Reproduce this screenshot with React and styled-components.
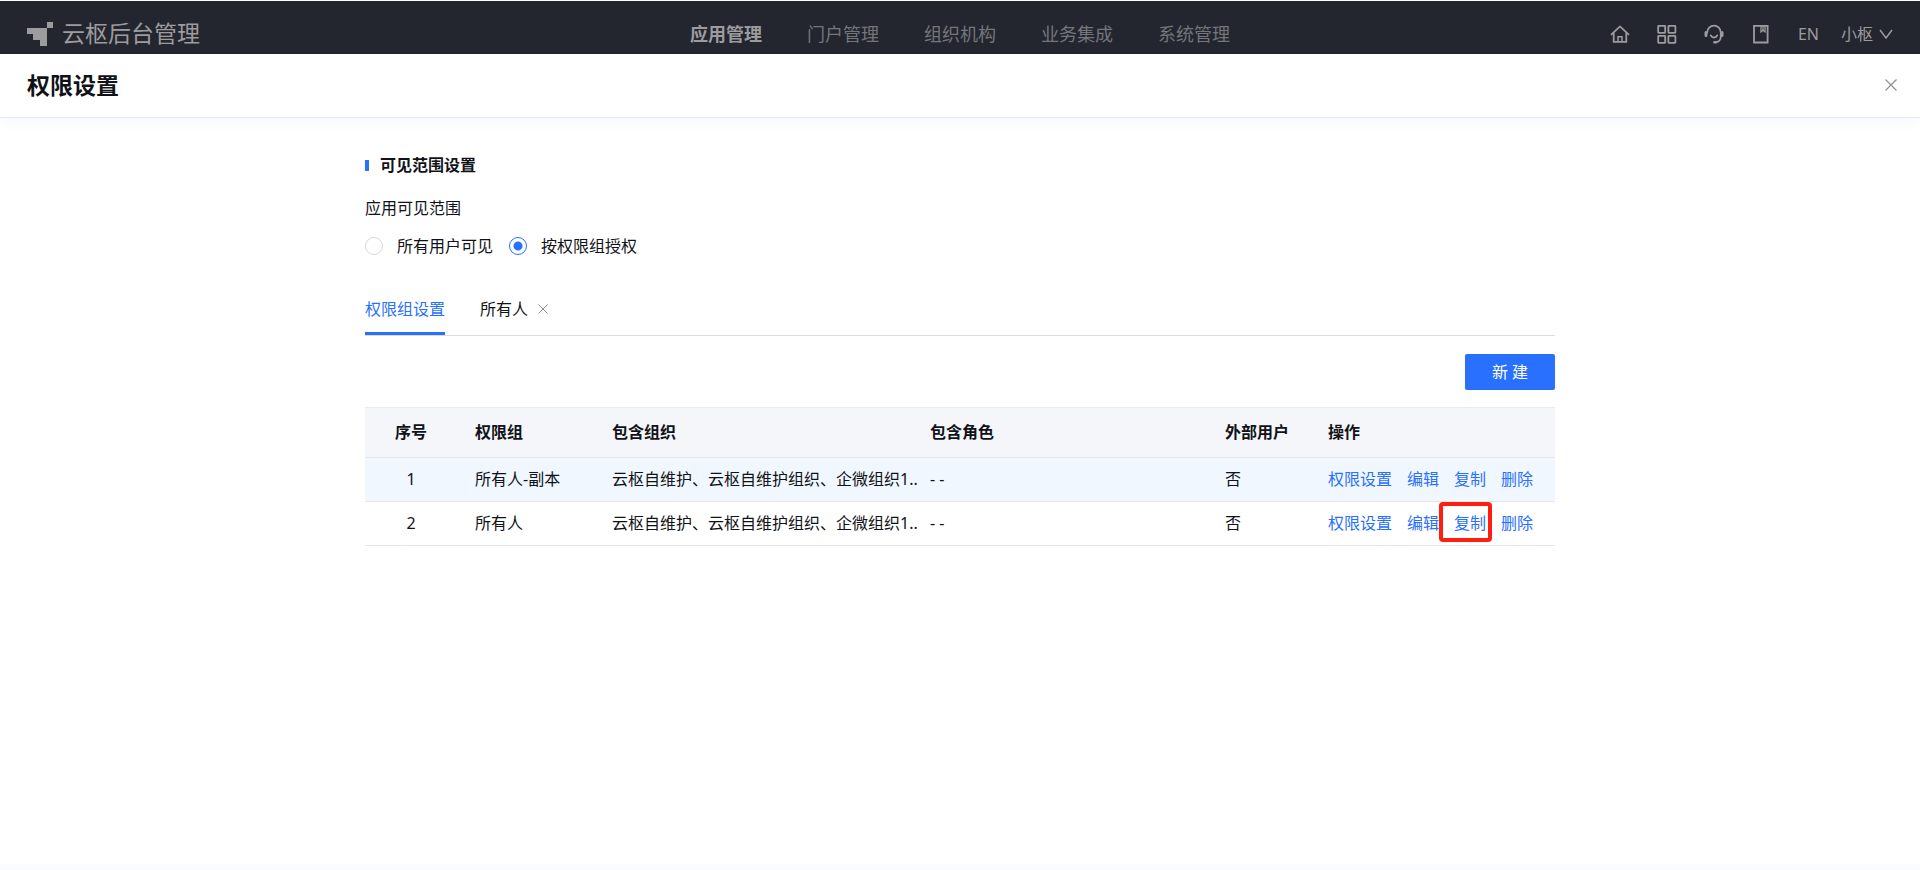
import { useState } from 'react';
import styled, { createGlobalStyle } from 'styled-components';

const GlobalStyle = createGlobalStyle`
    * {
        box-sizing: border-box;
    }
    body {
        margin: 0;
        background: #fff;
        color: #111218;
        font-family: "Noto Sans", "Noto Sans CJK SC", sans-serif;
        font-size: 16px;
        line-height: 22px;
    }
    button {
        font: inherit;
        color: inherit;
        background: none;
        border: none;
        padding: 0;
        cursor: pointer;
    }
    a {
        text-decoration: none;
    }
    svg {
        display: block;
    }
`;

const Page = styled.div`
    min-height: 100vh;
    display: flex;
    flex-direction: column;
`;

const TopBar = styled.header`
    display: grid;
    grid-template-columns: 1fr auto 1fr;
    align-items: center;
    height: 54px;
    padding: 13px 27px 0;
    border-top: 1px solid #fff;
    background: #23262e;
    color: #9c9c9e;
`;

const Brand = styled.a`
    display: flex;
    align-items: center;
    gap: 8px;
    color: inherit;
    font-size: 23px;
    line-height: 32px;
`;

const BrandName = styled.span`
    padding-bottom: 2px;
`;

const Nav = styled.nav`
    display: flex;
    gap: 45px;
`;

const NavLink = styled.a`
    font-size: 18px;
    line-height: 24px;
    color: ${(props) => (props.$active ? '#9c9c9e' : '#74767b')};
    font-weight: ${(props) => (props.$active ? 700 : 400)};
`;

const Tools = styled.div`
    display: flex;
    align-items: center;
    justify-content: flex-end;
    gap: 27px;
`;

const Account = styled.div`
    display: flex;
    align-items: center;
    gap: 22px;
`;

const ToolButton = styled.button`
    display: flex;
    align-items: center;
    justify-content: center;
    gap: 6px;
    min-width: 20px;
`;

const TitleBar = styled.div`
    display: flex;
    align-items: center;
    justify-content: space-between;
    height: 64px;
    padding: 0 23px 2px 27px;
    border-bottom: 1px solid #e6e9f2;
    box-shadow: 0 4px 12px rgba(41, 112, 255, 0.04);
`;

const Title = styled.h1`
    margin: 0;
    font-size: 23px;
    line-height: 32px;
    font-weight: 700;
`;

const CloseButton = styled.button`
    color: #8f9093;
`;

const Content = styled.main`
    flex: 1;
    width: 100%;
    max-width: 1190px;
    margin: 0 auto;
    padding-top: 36px;
`;

const SectionTitle = styled.h2`
    display: flex;
    align-items: center;
    gap: 11px;
    margin: 0;
    font-size: 16px;
    line-height: 22px;
    font-weight: 700;

    &::before {
        content: '';
        width: 4px;
        height: 11px;
        background: #2970ff;
    }
`;

const Fieldset = styled.fieldset`
    margin: 21px 0 0;
    padding: 0;
    border: none;
`;

const Legend = styled.legend`
    padding: 0;
`;

const RadioRow = styled.div`
    display: flex;
    gap: 16px;
    margin-top: 16px;
`;

const RadioLabel = styled.label`
    display: flex;
    align-items: center;
    gap: 14px;
    cursor: pointer;
`;

const Radio = styled.input`
    appearance: none;
    width: 18px;
    height: 18px;
    margin: 0;
    border: 1px solid #d9d9d9;
    border-radius: 50%;
    background: #fff;

    &:checked {
        border-color: #2970ff;
        background: radial-gradient(circle, #2970ff 4px, #fff 5px);
    }
`;

const Tabs = styled.div`
    display: flex;
    gap: 35px;
    margin-top: 32px;
    border-bottom: 1px solid #dcdcde;
`;

const TabItem = styled.div`
    display: flex;
    align-items: center;
    gap: 10px;
    height: 46px;
    padding-bottom: 4px;
    border-bottom: 3px solid ${(props) => (props.$active ? '#2970ff' : 'transparent')};
    color: ${(props) => (props.$active ? '#2970ff' : '#111218')};
`;

const Toolbar = styled.div`
    display: flex;
    justify-content: flex-end;
    padding: 18px 0 17px;
`;

const PrimaryButton = styled.button`
    width: 90px;
    height: 36px;
    border-radius: 2px;
    background: #2970ff;
    color: #fff;
`;

const Table = styled.table`
    width: 100%;
    table-layout: fixed;
    border-collapse: separate;
    border-spacing: 0;
    border-top: 1px solid #ebecef;
`;

const Col = styled.col`
    width: ${(props) => props.$width};
`;

const Th = styled.th`
    height: 50px;
    padding: 0 0 2px ${(props) => (props.$center ? '0' : '18px')};
    border-bottom: 1px solid #e4e6e9;
    background: #f4f6fa;
    text-align: ${(props) => (props.$center ? 'center' : 'left')};
    font-weight: 700;
    white-space: nowrap;
`;

const Row = styled.tr`
    background: ${(props) => (props.$hovered ? '#f0f7ff' : '#fff')};
`;

const Td = styled.td`
    height: 44px;
    padding: 0 0 2px ${(props) => (props.$center ? '0' : '18px')};
    border-bottom: 1px solid #e4e6e9;
    text-align: ${(props) => (props.$center ? 'center' : 'left')};
    white-space: nowrap;
`;

const Actions = styled.div`
    display: flex;
    gap: 15px;
`;

const ActionLink = styled.a`
    position: relative;
    color: #2970ff;

    &::after {
        content: '';
        display: ${(props) => (props.$marked ? 'block' : 'none')};
        position: absolute;
        inset: -10px -6px -8px -15px;
        border: 4px solid #ff1e10;
        border-radius: 4px;
    }
`;

const Footer = styled.footer`
    height: 6px;
    background: linear-gradient(#fdfdfe, #f9fafe);
`;

const LogoIcon = () => (
    <svg width="27" height="24" viewBox="0 0 27 24" fill="currentColor" shapeRendering="crispEdges" aria-hidden="true">
        <path d="M0 6h20v18h-7v-6H6v-6H0z" />
        <path d="M20 0h6v6h-6z" />
    </svg>
);

const iconProps = {
    width: 20,
    height: 20,
    viewBox: '0 0 20 20',
    fill: 'none',
    stroke: 'currentColor',
    strokeWidth: 1.8,
    'aria-hidden': true,
};

const HomeIcon = () => (
    <svg {...iconProps}>
        <path d="M1 10.8 10 2.4l9 8.4M3.7 9v8.8h12.6V9" />
        <path d="M8 17.8v-5h4v5" strokeWidth="1.5" />
    </svg>
);

const AppsIcon = () => (
    <svg {...iconProps}>
        <rect x="1.2" y="1.8" width="7" height="7" rx="0.5" />
        <rect x="11.4" y="1.8" width="7" height="7" rx="0.5" />
        <rect x="1.2" y="11.8" width="7" height="7" rx="0.5" />
        <rect x="11.4" y="11.8" width="7" height="7" rx="0.5" />
    </svg>
);

const SupportIcon = () => (
    <svg {...iconProps} strokeLinecap="round">
        <path d="M3.2 8.5a6.8 6.8 0 0 1 13.6 0v4c0 3-2 5.4-4.6 5.7" />
        <path d="M6.8 11.4a3.5 3.5 0 0 0 6.4 0" />
        <path d="M2 8.5v3M18 8.5v3" strokeWidth="3" />
        <path d="M10.4 18.3h1.6" strokeWidth="2.4" />
    </svg>
);

const BookIcon = () => (
    <svg {...iconProps}>
        <path d="M3 1.9h13.6v16.6H3z" />
        <path d="M10 1.9v6l2-1.6 2 1.6v-6" strokeWidth="1.3" />
        <path d="M12 1.9v4.4" strokeWidth="1.3" />
    </svg>
);

const ChevronIcon = () => (
    <svg width="14" height="10" viewBox="0 0 14 10" fill="none" stroke="currentColor" strokeWidth="1.5" aria-hidden="true">
        <path d="M1 1l6 8 6-8" />
    </svg>
);

const CrossIcon = ({ size }) => (
    <svg width={size} height={size} viewBox="0 0 12 12" fill="none" stroke="currentColor" strokeWidth="1.2" aria-hidden="true">
        <path d="M0.5 0.5l11 11M11.5 0.5l-11 11" />
    </svg>
);

const navItems = ['应用管理', '门户管理', '组织机构', '业务集成', '系统管理'];

const scopes = [
    { value: 'all', label: '所有用户可见' },
    { value: 'group', label: '按权限组授权' },
];

const columns = [
    { title: '序号', width: '92px', center: true },
    { title: '权限组', width: '137px' },
    { title: '包含组织', width: '318px' },
    { title: '包含角色', width: '295px' },
    { title: '外部用户', width: '103px' },
    { title: '操作', width: 'auto' },
];

const actions = ['权限设置', '编辑', '复制', '删除'];

const groups = [
    { id: 1, name: '所有人-副本', orgs: '云枢自维护、云枢自维护组织、企微组织1..', roles: '- -', external: '否', hovered: true },
    { id: 2, name: '所有人', orgs: '云枢自维护、云枢自维护组织、企微组织1..', roles: '- -', external: '否', marked: '复制' },
];

function TopNavigation() {
    return (
        <TopBar>
            <Brand href="#">
                <LogoIcon />
                <BrandName>云枢后台管理</BrandName>
            </Brand>
            <Nav>
                {navItems.map((item, index) => (
                    <NavLink key={item} href="#" $active={index === 0}>{item}</NavLink>
                ))}
            </Nav>
            <Tools>
                <ToolButton aria-label="首页"><HomeIcon /></ToolButton>
                <ToolButton aria-label="应用"><AppsIcon /></ToolButton>
                <ToolButton aria-label="客服"><SupportIcon /></ToolButton>
                <ToolButton aria-label="文档"><BookIcon /></ToolButton>
                <Account>
                    <ToolButton>EN</ToolButton>
                    <ToolButton>小枢 <ChevronIcon /></ToolButton>
                </Account>
            </Tools>
        </TopBar>
    )
}

function GroupTable() {
    return (
        <Table>
            <colgroup>
                {columns.map((column) => <Col key={column.title} $width={column.width} />)}
            </colgroup>
            <thead>
                <tr>
                    {columns.map((column) => (
                        <Th key={column.title} $center={column.center}>{column.title}</Th>
                    ))}
                </tr>
            </thead>
            <tbody>
                {groups.map((group) => (
                    <Row key={group.id} $hovered={group.hovered}>
                        <Td $center>{group.id}</Td>
                        <Td>{group.name}</Td>
                        <Td>{group.orgs}</Td>
                        <Td>{group.roles}</Td>
                        <Td>{group.external}</Td>
                        <Td>
                            <Actions>
                                {actions.map((action) => (
                                    <ActionLink key={action} href="#" $marked={group.marked === action}>{action}</ActionLink>
                                ))}
                            </Actions>
                        </Td>
                    </Row>
                ))}
            </tbody>
        </Table>
    )
}

function App() {
    const [scope, setScope] = useState('group');
    const [tab, setTab] = useState('settings');

    return (
        <Page>
            <GlobalStyle />
            <TopNavigation />
            <TitleBar>
                <Title>权限设置</Title>
                <CloseButton aria-label="关闭"><CrossIcon size={12} /></CloseButton>
            </TitleBar>
            <Content>
                <SectionTitle>可见范围设置</SectionTitle>
                <Fieldset>
                    <Legend>应用可见范围</Legend>
                    <RadioRow>
                        {scopes.map((item) => (
                            <RadioLabel key={item.value}>
                                <Radio
                                    type="radio"
                                    name="scope"
                                    value={item.value}
                                    checked={scope === item.value}
                                    onChange={() => setScope(item.value)}
                                />
                                {item.label}
                            </RadioLabel>
                        ))}
                    </RadioRow>
                </Fieldset>
                <Tabs>
                    <TabItem $active={tab === 'settings'}>
                        <button onClick={() => setTab('settings')}>权限组设置</button>
                    </TabItem>
                    <TabItem $active={tab === 'everyone'}>
                        <button onClick={() => setTab('everyone')}>所有人</button>
                        <CloseButton aria-label="关闭标签"><CrossIcon size={10} /></CloseButton>
                    </TabItem>
                </Tabs>
                <Toolbar>
                    <PrimaryButton>新 建</PrimaryButton>
                </Toolbar>
                <GroupTable />
            </Content>
            <Footer />
        </Page>
    )
}

export default App
